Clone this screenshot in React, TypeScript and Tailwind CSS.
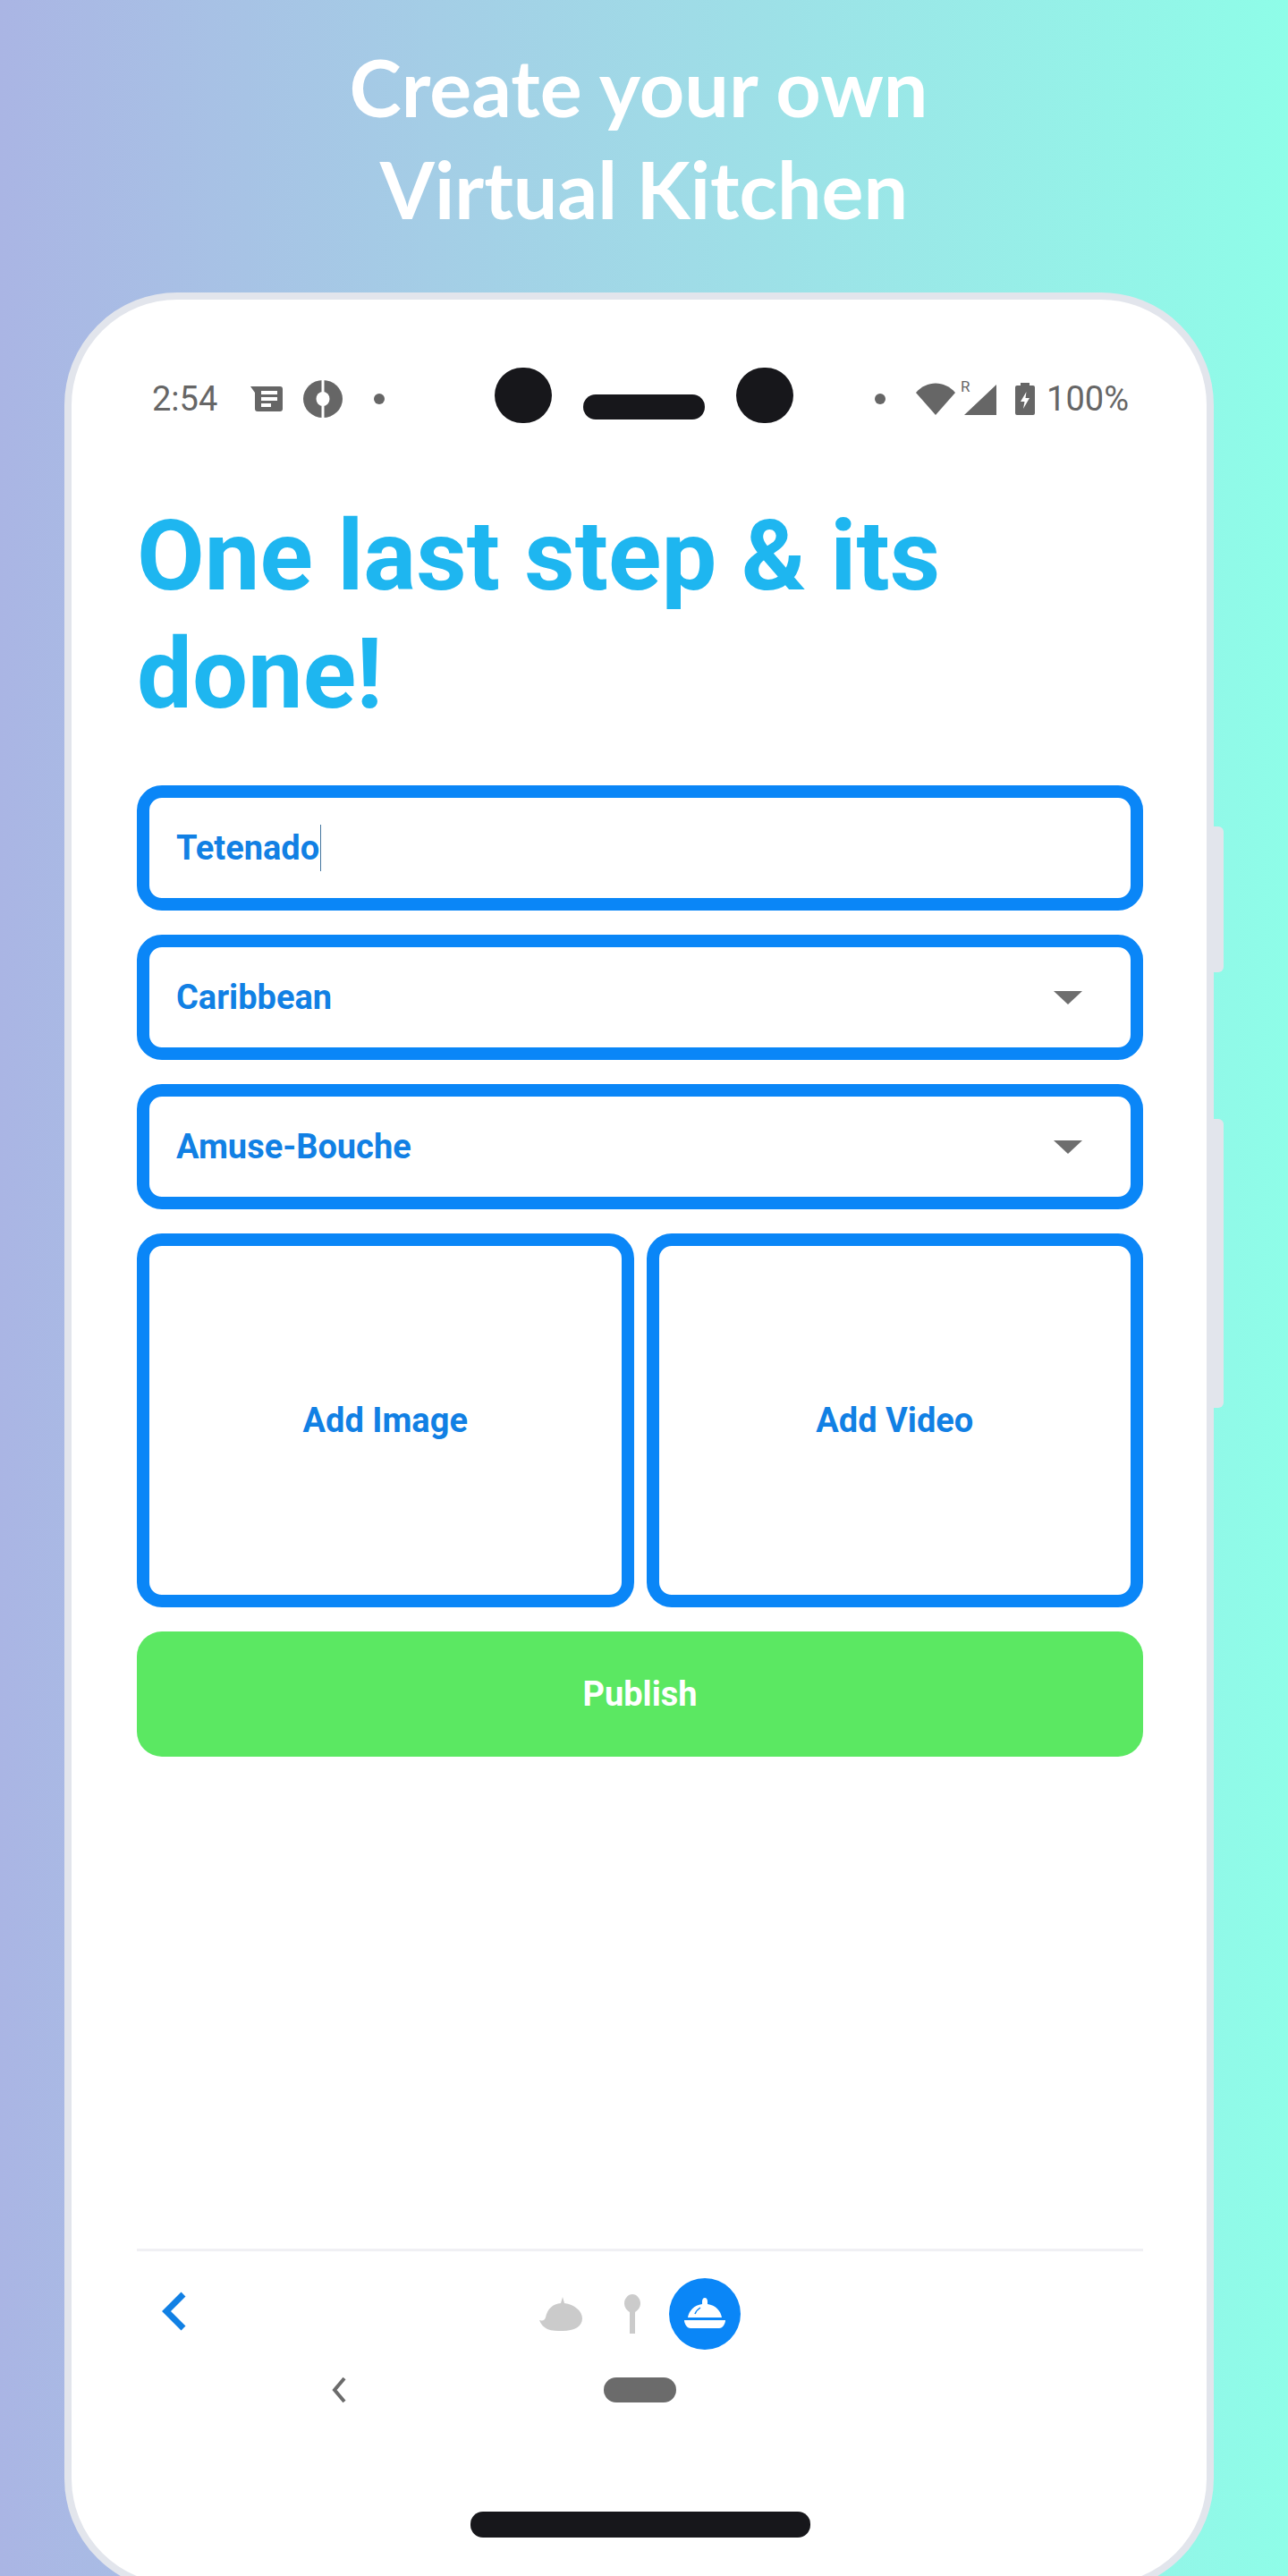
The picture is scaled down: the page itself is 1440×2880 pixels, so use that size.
import React from "react";

function Field({ children, arrow }: { children: React.ReactNode; arrow?: boolean }) {
  return (
    <div className="flex h-[140px] items-center justify-between rounded-[28px] border-[14px] border-[#0a86f7] pl-[30px] pr-[54px] text-[38px] font-bold text-[#1180e4]">
      <span className="flex items-center">{children}</span>
      {arrow && (
        <svg width="32" height="15" viewBox="0 0 32 15">
          <path d="M0 0h32L16 15z" fill="#6e6e6e" />
        </svg>
      )}
    </div>
  );
}

function MediaCard({ label }: { label: string }) {
  return (
    <div className="flex h-[418px] flex-1 items-center justify-center rounded-[28px] border-[14px] border-[#0a86f7] text-[38px] font-bold text-[#1180e4]">
      {label}
    </div>
  );
}

export default function App() {
  return (
    <div className="relative h-[2880px] w-[1440px] overflow-hidden bg-gradient-to-r from-[#aab5e4] to-[#8efde8] font-[Roboto,sans-serif]">
      <div className="flex h-[327px] flex-col items-center pl-[0px] pt-[40px] text-center font-[Lato,sans-serif] text-[88px] font-bold leading-[114px] text-white">
        <div className="-ml-[12px]">Create your own</div>
        <div>Virtual Kitchen</div>
      </div>

      <div className="relative ml-[72px] flex h-[2570px] w-[1285px] flex-col rounded-[126px] border-8 border-[#e2e5ec] bg-white">
        <div className="absolute -right-[19px] top-[589px] h-[163px] w-[11px] rounded-r-[6px] bg-[#e2e5ec]" />
        <div className="absolute -right-[19px] top-[916px] h-[323px] w-[11px] rounded-r-[6px] bg-[#e2e5ec]" />

        <div className="flex h-[150px] items-start justify-between pl-[90px] pr-[87px] pt-[80px] text-[38px] leading-[50px] text-[#666666]">
          <div className="flex w-[356px] items-center pt-[6px]">
            <span>2:54</span>
            <svg className="ml-[37px]" width="36" height="28" viewBox="0 0 36 28">
              <path d="M0 0h33a3 3 0 0 1 3 3v22a3 3 0 0 1-3 3H8a3 3 0 0 1-3-3V7z" fill="#666" />
              <path d="M12 5h18v4H12zM12 12h18v4H12zM12 19h11v4H12z" fill="#fff" />
            </svg>
            <svg className="ml-[23px]" width="44" height="42" viewBox="0 0 44 42">
              <ellipse cx="22" cy="21" rx="22" ry="21" fill="#666" />
              <ellipse cx="22" cy="21" rx="7.5" ry="8" fill="#fff" />
              <rect x="20.5" y="0" width="3" height="42" fill="#fff" />
            </svg>
            <div className="ml-[35px] h-[12px] w-[12px] rounded-full bg-[#666666]" />
          </div>
          <div className="relative -mt-[4px] flex w-[334px] items-start justify-between">
            <div className="h-[62px] w-[64px] rounded-full bg-[#17171b]" />
            <div className="mt-[30px] h-[28px] w-[136px] rounded-[14px] bg-[#17171b]" />
            <div className="h-[62px] w-[64px] rounded-full bg-[#17171b]" />
          </div>
          <div className="flex w-[348px] items-center justify-end pt-[6px]">
            <div className="h-[12px] w-[12px] rounded-full bg-[#666666]" />
            <svg className="ml-[34px]" width="44" height="36" viewBox="0 0 44 36">
              <path d="M0 11C12 -3 32 -3 44 11L22 36z" fill="#666" />
            </svg>
            <div className="relative ml-[10px] h-[36px] w-[36px]">
              <span className="absolute -left-[4px] -top-[6px] text-[17px] leading-[20px]">R</span>
              <svg className="absolute left-0 top-0" width="36" height="36" viewBox="0 0 36 36">
                <path d="M36 2V36H0z" fill="#666" />
              </svg>
            </div>
            <svg className="ml-[21px]" width="22" height="36" viewBox="0 0 22 36">
              <path d="M6 0h10v3h4a2 2 0 0 1 2 2v29a2 2 0 0 1-2 2H2a2 2 0 0 1-2-2V5a2 2 0 0 1 2-2h4z" fill="#666" />
              <path d="M12.500 10 6 21h4.500L9 29l7-12h-4.500z" fill="#fff" />
            </svg>
            <span className="ml-[13px]">100%</span>
          </div>
        </div>

        <div className="flex flex-1 flex-col pl-[73px] pr-[71px]">
          <h1 className="mt-[71px] text-[110px] font-bold leading-[132px] text-[#1eb6f0]">
            One last step &amp; its<br />done!
          </h1>
          <div className="mt-[58px] flex flex-col gap-[27px]">
            <Field>
              Tetenado<span className="ml-px h-[52px] w-px bg-[#44769f]" />
            </Field>
            <Field arrow>Caribbean</Field>
            <Field arrow>Amuse-Bouche</Field>
            <div className="flex gap-[14px]">
              <MediaCard label="Add Image" />
              <MediaCard label="Add Video" />
            </div>
            <div className="flex h-[140px] items-center justify-center rounded-[28px] bg-[#5be862] text-[38px] font-bold text-white">
              Publish
            </div>
          </div>

          <div className="mt-auto border-t-[3px] border-[#f0f0f4]">
            <div className="relative flex h-[140px] items-center justify-center pl-[0px]">
              <svg className="absolute left-[28px] top-[45px]" width="28" height="44" viewBox="0 0 28 44" fill="none">
                <path d="M24 3 5 22l19 19" stroke="#1180e4" strokeWidth="7" />
              </svg>
              <svg className="ml-[0px]" width="48" height="38" viewBox="0 0 48 38">
                <path d="M0 26c4 1 6 0 7-3C9 13 15 8 24 7l2-7 2 7c11 1 20 9 20 17 0 9-9 14-22 14-6 0-12 0-17-2-4-2-7-5-9-10z" fill="#cbcbcb" />
              </svg>
              <svg className="ml-[47px]" width="18" height="44" viewBox="0 0 18 44">
                <path d="M9 0c5 0 9 5 9 10 0 5-3 8-6 10v24H6V20c-3-2-6-5-6-10C0 5 4 0 9 0z" fill="#cbcbcb" />
              </svg>
              <div className="ml-[32px] flex h-[80px] w-[80px] items-center justify-center rounded-full bg-[#0a86f7]">
                <svg width="46" height="36" viewBox="0 0 46 36">
                  <path d="M23 0c2 0 3 2 3 4v3c9 1 15 8 16 15H4C5 15 11 8 20 7V4c0-2 1-4 3-4z" fill="#fff" />
                  <path d="M0 25h46c0 4-3 9-7 9H7c-4 0-7-5-7-9z" fill="#fff" />
                  <path d="M12 18c1-3 3-5 6-7" stroke="#0a86f7" strokeWidth="1.500" fill="none" />
                </svg>
              </div>
            </div>
          </div>

          <div className="relative flex h-[84px] items-center justify-center">
            <svg className="absolute left-[216px] top-[0px]" width="20" height="30" viewBox="0 0 20 30" fill="none">
              <path d="M16 2 5 15l11 13" stroke="#6b6b6b" strokeWidth="4" />
            </svg>
            <div className="-mt-[54px] h-[28px] w-[81px] rounded-[14px] bg-[#6b6b6b]" />
          </div>

          <div className="mt-[67px] flex justify-center pr-[0px]">
            <div className="h-[29px] w-[380px] rounded-[14px] bg-[#17171b]" />
          </div>
          <div className="h-[52px]" />
        </div>
      </div>
    </div>
  );
}
